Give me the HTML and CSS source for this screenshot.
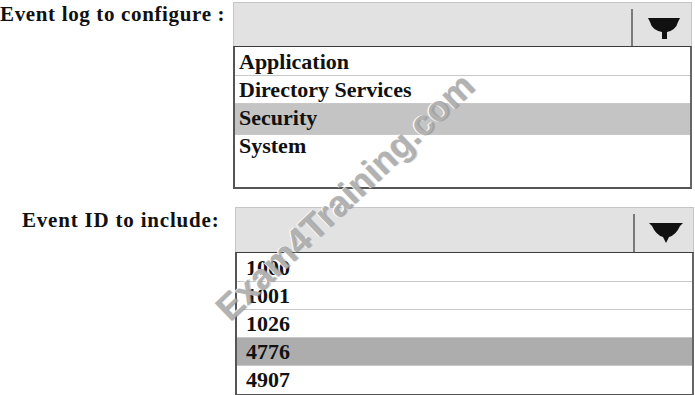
FILE: index.html
```html
<!DOCTYPE html>
<html lang="en">
<head>
  <meta charset="UTF-8">
  <meta name="viewport" content="width=device-width, initial-scale=1">
  <title>Event log settings</title>
  <link rel="stylesheet" href="styles.css">
</head>
<body>

<div class="page">

  <!-- Event log -->
  <div class="group group-log">
    <div class="label">Event log to configure :</div>
    <div class="control">
      <div class="select">
        <div class="select-value"></div>
        <div class="select-arrow">
          <svg width="32" height="22" viewBox="0 0 32 22">
            <path d="M0 0 H32 L30 4 Q28 12 19 14 V21 H14 V14 Q4 12 2 4 Z" fill="#111"/>
          </svg>
        </div>
      </div>
      <ul class="list">
        <li class="row">Application</li>
        <li class="row">Directory Services</li>
        <li class="row r-sec selected">Security</li>
        <li class="row r-sys last">System</li>
      </ul>
    </div>
  </div>

  <!-- Event ID -->
  <div class="group group-id">
    <div class="label">Event ID to include:</div>
    <div class="control">
      <div class="select">
        <div class="select-value"></div>
        <div class="select-arrow">
          <svg width="34" height="22" viewBox="0 0 34 22">
            <path d="M0 1 H34 L31 4 Q27 13 20 15 L17 21 L14 15 Q7 13 3 4 Z" fill="#111"/>
          </svg>
        </div>
      </div>
      <ul class="list">
        <li class="row">1000</li>
        <li class="row">1001</li>
        <li class="row">1026</li>
        <li class="row selected dark">4776</li>
        <li class="row last">4907</li>
      </ul>
    </div>
  </div>

  <div class="watermark">Exam4Training.com</div>

</div>

</body>
</html>
```

FILE: styles.css
```css
body {
  margin: 0;
  background: #fff;
  color: #111;
  font-family: "Liberation Serif", "Times New Roman", serif;
}

.page {
  position: relative;
  width: 695px;
  height: 395px;
  overflow: hidden;
}

.group {
  display: flex;
}

.group-log {
  padding-top: 2px;
}

.group-id {
  margin-top: 18px;
}

.label {
  font-size: 21px;
  font-weight: bold;
  letter-spacing: 0.65px;
  line-height: 24px;
  white-space: nowrap;
}

.group-log .label {
  width: 233px;
}

.group-id .label {
  width: 213px;
  padding-left: 22px;
  padding-top: 1px;
  letter-spacing: 0.8px;
}

.control {
  width: 459px;
}

/* Select */
.select {
  display: flex;
  height: 43px;
  background: #e2e2e2;
  border: 1px solid #c6c6c6;
  border-bottom: none;
}

.group-id .select {
  height: 44px;
}

.select-value {
  flex: 1;
  border-right: 2px solid #7a7a7a;
  margin-top: 6px;
}

.select-arrow {
  width: 58px;
  display: flex;
  justify-content: center;
  padding-top: 15px;
  padding-left: 3px;
  box-sizing: border-box;
}

.group-id .select-arrow {
  padding-top: 14px;
}

/* List */
.list {
  list-style: none;
  margin: 0;
  padding: 1px 0 0;
  height: 139px;
  border-top: 1px solid #3c3c3c;
  border-left: 2px solid #555;
  border-right: 2px solid #666;
  border-bottom: 2px solid #555;
  background: #fff;
  font-size: 22px;
  font-weight: bold;
}

.group-id .list {
  height: 140px;
}

.row {
  height: 27px;
  line-height: 28px;
  padding-left: 4px;
  border-bottom: 1px solid #c8c8c8;
}

.r-sec {
  height: 30px;
}

.r-sys {
  line-height: 22px;
}

.group-id .row {
  padding-left: 9px;
}

.row.last {
  border-bottom: none;
}

.selected {
  background: #c4c4c4;
}

.selected.dark {
  background: #adadad;
}

/* Watermark */
.watermark {
  position: absolute;
  left: 165px;
  top: 176px;
  width: 360px;
  text-align: center;
  font-family: "Liberation Sans", Arial, sans-serif;
  font-size: 36px;
  font-weight: bold;
  color: rgba(160, 160, 160, 0.8);
  text-shadow: -1px -1px 0 rgba(255, 255, 255, 0.9), 1px 1px 0 rgba(120, 120, 120, 0.35);
  transform: rotate(-43.5deg);
  white-space: nowrap;
  pointer-events: none;
}
```
